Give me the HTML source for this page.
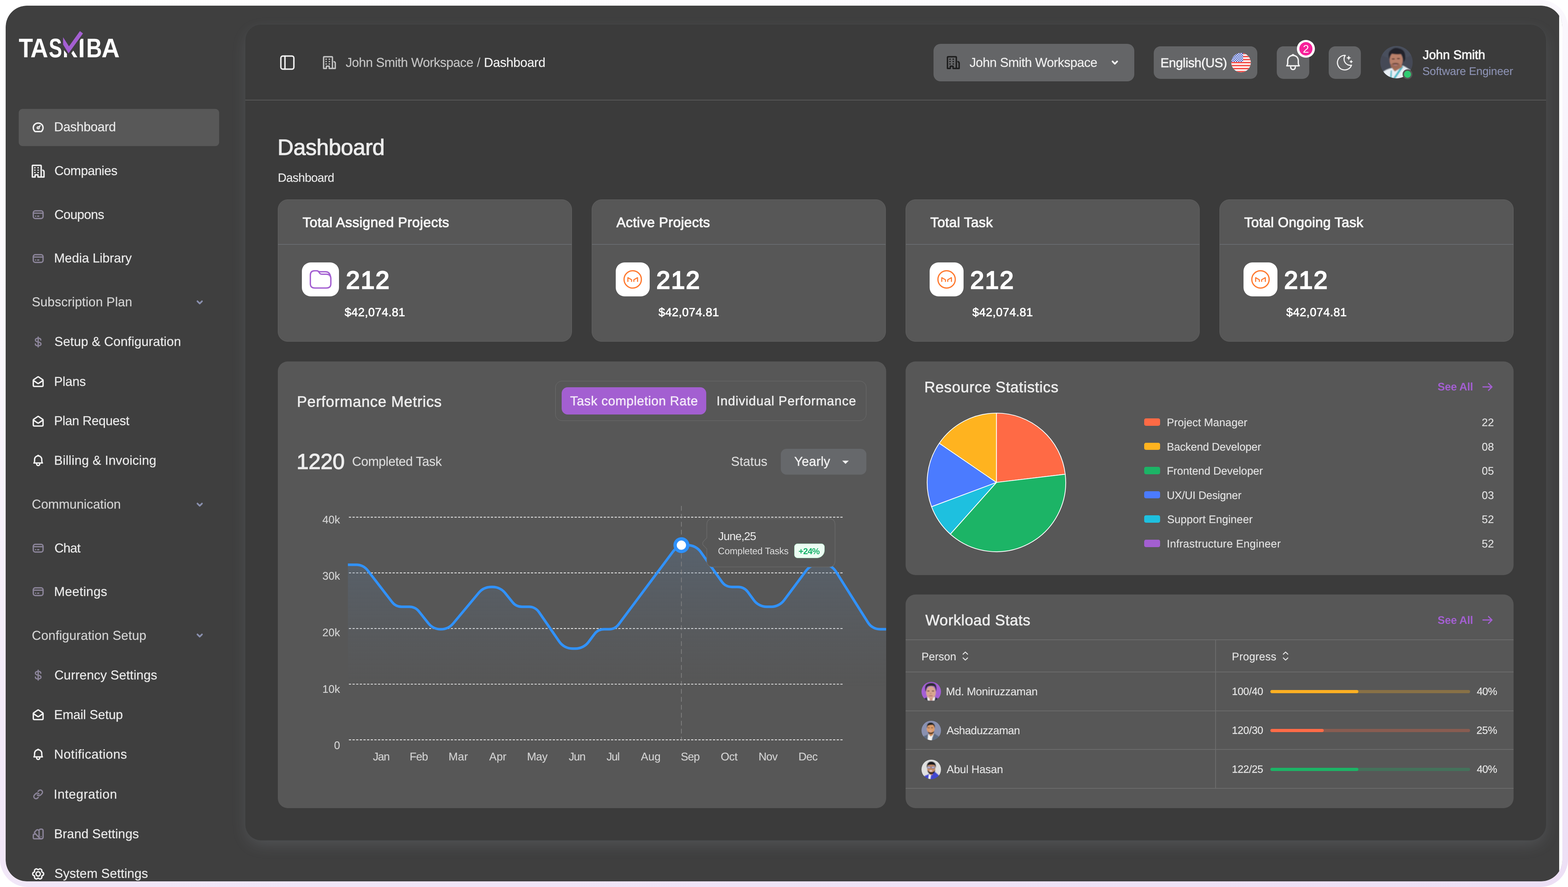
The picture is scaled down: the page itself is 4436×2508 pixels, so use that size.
<!DOCTYPE html>
<html lang="en"><head><meta charset="utf-8">
<title>Taskiba Dashboard</title>
<style>
*{box-sizing:border-box;margin:0;padding:0}
html,body{width:4436px;height:2508px;overflow:hidden;background:#fff}
body{position:relative;font-family:"Liberation Sans", sans-serif;}
.b{position:absolute;display:block}
.t{position:absolute;white-space:pre;line-height:1;font-family:"Liberation Sans", sans-serif;will-change:transform;text-rendering:geometricPrecision}
</style></head><body>
<div class="b" style="left:0px;top:0px;width:4436px;height:2508px;background:linear-gradient(168deg,#ffffff 0%,#fbf9fd 25%,#f3eaf9 60%,#eddff5 100%);border-radius:78px;"></div>
<div class="b" style="left:16px;top:16px;width:4404px;height:2476px;border-radius:60px;background:#fff;overflow:hidden"><div class="b" style="left:0;top:0;width:4404px;height:2476px;border-radius:60px;background:#3f3f3f"></div><div class="b" style="left:4395px;top:0;width:9px;height:2476px;background:#fff"></div></div>
<div class="b" style="left:692.6px;top:67.6px;width:3682.4px;height:2309.4px;background:#3b3b3b;border-radius:46px;border:1px solid #464849;box-shadow:0 16px 46px -8px rgba(170,182,194,0.20);"></div>
<div class="b" style="left:693.6px;top:282.4px;width:3680.4px;height:2px;background:#5c5c5c;"></div>
<div class="b" style="left:0;top:0;width:400px;height:200px">
<span class="t" style="top:99.00px;font-size:76px;color:#ffffff;left:52.70px;transform-origin:0 0;transform:scaleX(0.8652);font-weight:700;">T</span>
<span class="t" style="top:99.00px;font-size:76px;color:#ffffff;left:86.48px;transform-origin:0 0;transform:scaleX(0.9154);font-weight:700;">A</span>
<span class="t" style="top:99.00px;font-size:76px;color:#ffffff;left:137.62px;transform-origin:0 0;transform:scaleX(0.7413);font-weight:700;">S</span>
<span class="t" style="top:99.00px;font-size:76px;color:#ffffff;left:176.83px;transform-origin:0 0;transform:scaleX(0.7740);font-weight:700;">K</span>
<span class="t" style="top:99.00px;font-size:76px;color:#ffffff;left:220.88px;transform-origin:0 0;transform:scaleX(0.9250);font-weight:700;">I</span>
<span class="t" style="top:99.00px;font-size:76px;color:#ffffff;left:243.95px;transform-origin:0 0;transform:scaleX(0.8106);font-weight:700;">B</span>
<span class="t" style="top:99.00px;font-size:76px;color:#ffffff;left:287.16px;transform-origin:0 0;transform:scaleX(0.9385);font-weight:700;">A</span>
</div>
<svg class="b" style="left:170px;top:80px" width="80" height="90" viewBox="170 80 80 90"><path d="M175 100 L224 100 L224 120.7 L201.1 151.4 L197.2 157.2 L194 158 L180.7 141.2 L175 134 Z" fill="#3f3f3f"/><path d="M223 106 L231 106 L224.4 117.6 L223 117.6 Z" fill="#3f3f3f"/><path d="M178.5 105.2 L178.5 126 L193.9 151.1 L234.8 94.5 L226.1 88 L195.1 131 Z" fill="#a45fd2"/></svg>
<div class="b" style="left:52.6px;top:307.5px;width:567.4px;height:105.2px;background:#585858;border-radius:11px;"></div>
<svg class="b" style="left:87.6px;top:339.8px;" width="40" height="40" viewBox="-20 -20 40 40" fill="none" xmlns="http://www.w3.org/2000/svg"><path d="M-7.6 12 H7.6 C10 12 13.8 6.6 13.8 1.4 C13.8 -6.4 7.6 -12 0 -12 C-7.6 -12 -13.8 -6.4 -13.8 1.4 C-13.8 6.6 -10 12 -7.6 12 Z" stroke="#f2f2f2" stroke-width="4" stroke-linecap="round" stroke-linejoin="round" fill="none"/><circle cx="0" cy="1.4" r="2.9" stroke="#f2f2f2" stroke-width="3.2" stroke-linecap="round" stroke-linejoin="round" fill="none"/><path d="M2.4 -1 L5.6 -4.4" stroke="#f2f2f2" stroke-width="3.4" stroke-linecap="round" stroke-linejoin="round" fill="none"/></svg>
<div class="t" style="top:341.00px;font-size:36.4px;color:#e9e9e9;letter-spacing:-0.386px;-webkit-text-stroke:0.3px #e9e9e9;left:152.65px;">Dashboard</div>
<svg class="b" style="left:85.6px;top:461.5px;" width="44" height="44" viewBox="-22 -22 44 44" fill="none" xmlns="http://www.w3.org/2000/svg"><g transform="scale(1.0)"><path d="M-16.5 16.5 V-14.5 Q-16.5 -16.5 -14.5 -16.5 H6.5 Q8.5 -16.5 8.5 -14.5 V16.5 M-16.5 16.5 H-8.6 V10.2 H-0.6 V16.5 H16.5 V1.2 Q16.5 -1.2 13.2 -2.6" stroke="#f2f2f2" stroke-width="4" stroke-linecap="round" stroke-linejoin="round" fill="none"/><path d="M-9.8 -9.6 h0.9 M-0.6 -9.6 h0.9 M-9.8 -2.9 h0.9 M-0.6 -2.9 h0.9 M-9.8 3.9 h0.9 M-0.6 3.9 h0.9" stroke="#f2f2f2" stroke-width="3.6" stroke-linecap="round" stroke-linejoin="round" fill="none"/></g></svg>
<div class="t" style="top:465.00px;font-size:36.4px;color:#e9e9e9;letter-spacing:-0.697px;-webkit-text-stroke:0.3px #e9e9e9;left:153.65px;">Companies</div>
<svg class="b" style="left:87.6px;top:587.4px;" width="40" height="40" viewBox="-20 -20 40 40" fill="none" xmlns="http://www.w3.org/2000/svg"><rect x="-13.8" y="-10.8" width="27.6" height="21.6" rx="5.5" stroke="#8b8499" stroke-width="3.7" stroke-linecap="round" stroke-linejoin="round" fill="none"/><path d="M-13.8 -4.2 H13.8" stroke="#8b8499" stroke-width="3.4" stroke-linecap="round" stroke-linejoin="round" fill="none"/><path d="M-7.6 4.3 h0.6 M-1.6 4.3 h3.4" stroke="#8b8499" stroke-width="3.6" stroke-linecap="round" stroke-linejoin="round" fill="none"/></svg>
<div class="t" style="top:589.00px;font-size:36.4px;color:#e9e9e9;letter-spacing:-0.796px;-webkit-text-stroke:0.3px #e9e9e9;left:153.65px;">Coupons</div>
<svg class="b" style="left:87.6px;top:710.8px;" width="40" height="40" viewBox="-20 -20 40 40" fill="none" xmlns="http://www.w3.org/2000/svg"><rect x="-13.8" y="-10.8" width="27.6" height="21.6" rx="5.5" stroke="#8b8499" stroke-width="3.7" stroke-linecap="round" stroke-linejoin="round" fill="none"/><path d="M-13.8 -4.2 H13.8" stroke="#8b8499" stroke-width="3.4" stroke-linecap="round" stroke-linejoin="round" fill="none"/><path d="M-7.6 4.3 h0.6 M-1.6 4.3 h3.4" stroke="#8b8499" stroke-width="3.6" stroke-linecap="round" stroke-linejoin="round" fill="none"/></svg>
<div class="t" style="top:712.00px;font-size:36.4px;color:#e9e9e9;letter-spacing:-0.055px;-webkit-text-stroke:0.3px #e9e9e9;left:152.65px;">Media Library</div>
<div class="t" style="top:836.00px;font-size:36.4px;color:#d2d2d2;letter-spacing:0.056px;-webkit-text-stroke:0.25px #d2d2d2;left:89.72px;">Subscription Plan</div>
<svg class="b" style="left:551.3px;top:840.6px;" width="28" height="28" viewBox="-14 -14 28 28" fill="none" xmlns="http://www.w3.org/2000/svg"><path d="M-6.4 -3.2 L0 3.2 L6.4 -3.2" stroke="#8a90ae" stroke-width="4.6" stroke-linecap="round" stroke-linejoin="round" fill="none"/></svg>
<svg class="b" style="left:87.6px;top:946.9px;" width="40" height="40" viewBox="-20 -20 40 40" fill="none" xmlns="http://www.w3.org/2000/svg"><path d="M0 -14 V14" stroke="#8b8499" stroke-width="3.6" stroke-linecap="round" stroke-linejoin="round" fill="none"/><path d="M7.6 -5.4 C7.6 -9 4.6 -10.6 0 -10.6 C-4.6 -10.6 -7.8 -8.8 -7.8 -5.6 C-7.8 -2.2 -4.8 -1 0 0 C4.8 1 8 2.2 8 5.6 C8 8.8 4.6 10.6 0 10.6 C-4.6 10.6 -7.9 9 -7.9 5.4" stroke="#8b8499" stroke-width="3.6" stroke-linecap="round" stroke-linejoin="round" fill="none"/></svg>
<div class="t" style="top:948.00px;font-size:36.4px;color:#e9e9e9;letter-spacing:0.104px;-webkit-text-stroke:0.3px #e9e9e9;left:153.65px;">Setup &amp; Configuration</div>
<svg class="b" style="left:87.6px;top:1059.2px;" width="40" height="40" viewBox="-20 -20 40 40" fill="none" xmlns="http://www.w3.org/2000/svg"><path d="M-13.8 -3.4 Q-13.8 -4.6 -12.8 -5.3 L-1.6 -13 Q0 -14 1.6 -13 L12.8 -5.3 Q13.8 -4.6 13.8 -3.4 V10.4 Q13.8 13.6 10.6 13.6 H-10.6 Q-13.8 13.6 -13.8 10.4 Z" stroke="#f2f2f2" stroke-width="3.9" stroke-linecap="round" stroke-linejoin="round" fill="none"/><path d="M-12.6 -2.6 L-1.6 4.9 Q0 5.9 1.6 4.9 L12.6 -2.6" stroke="#f2f2f2" stroke-width="3.9" stroke-linecap="round" stroke-linejoin="round" fill="none"/></svg>
<div class="t" style="top:1061.00px;font-size:36.4px;color:#e9e9e9;letter-spacing:-0.284px;-webkit-text-stroke:0.3px #e9e9e9;left:152.65px;">Plans</div>
<svg class="b" style="left:87.6px;top:1170.7px;" width="40" height="40" viewBox="-20 -20 40 40" fill="none" xmlns="http://www.w3.org/2000/svg"><path d="M-13.8 -3.4 Q-13.8 -4.6 -12.8 -5.3 L-1.6 -13 Q0 -14 1.6 -13 L12.8 -5.3 Q13.8 -4.6 13.8 -3.4 V10.4 Q13.8 13.6 10.6 13.6 H-10.6 Q-13.8 13.6 -13.8 10.4 Z" stroke="#f2f2f2" stroke-width="3.9" stroke-linecap="round" stroke-linejoin="round" fill="none"/><path d="M-12.6 -2.6 L-1.6 4.9 Q0 5.9 1.6 4.9 L12.6 -2.6" stroke="#f2f2f2" stroke-width="3.9" stroke-linecap="round" stroke-linejoin="round" fill="none"/></svg>
<div class="t" style="top:1172.00px;font-size:36.4px;color:#e9e9e9;letter-spacing:-0.498px;-webkit-text-stroke:0.3px #e9e9e9;left:152.65px;">Plan Request</div>
<svg class="b" style="left:79.6px;top:1275px;" width="56" height="56" viewBox="-28 -28 56 56" fill="none" xmlns="http://www.w3.org/2000/svg"><g transform="scale(1.0)"><path d="M-12 6.2 H12 C10.6 4.6 10.2 2.8 10.2 0 V-3.6 C10.2 -9.6 6 -13.8 0 -13.8 C-6 -13.8 -10.2 -9.6 -10.2 -3.6 V0 C-10.2 2.8 -10.6 4.6 -12 6.2 Z" stroke="#f2f2f2" stroke-width="3.8" stroke-linecap="round" stroke-linejoin="round" fill="none"/><path d="M-4.4 8.6 C-4.4 11.4 -2.6 13.4 0 13.4 C2.6 13.4 4.4 11.4 4.4 8.6" stroke="#f2f2f2" stroke-width="3.8" stroke-linecap="round" stroke-linejoin="round" fill="none"/><path d="M-1.4 -14.6 Q0 -16 1.4 -14.6" stroke="#f2f2f2" stroke-width="3.8" stroke-linecap="round" stroke-linejoin="round" fill="none"/></g></svg>
<div class="t" style="top:1284.00px;font-size:36.4px;color:#e9e9e9;letter-spacing:0.224px;-webkit-text-stroke:0.3px #e9e9e9;left:152.65px;">Billing &amp; Invoicing</div>
<div class="t" style="top:1408.00px;font-size:36.4px;color:#d2d2d2;letter-spacing:-0.086px;-webkit-text-stroke:0.25px #d2d2d2;left:89.72px;">Communication</div>
<svg class="b" style="left:551.3px;top:1412.5px;" width="28" height="28" viewBox="-14 -14 28 28" fill="none" xmlns="http://www.w3.org/2000/svg"><path d="M-6.4 -3.2 L0 3.2 L6.4 -3.2" stroke="#8a90ae" stroke-width="4.6" stroke-linecap="round" stroke-linejoin="round" fill="none"/></svg>
<svg class="b" style="left:87.6px;top:1530px;" width="40" height="40" viewBox="-20 -20 40 40" fill="none" xmlns="http://www.w3.org/2000/svg"><rect x="-13.8" y="-10.8" width="27.6" height="21.6" rx="5.5" stroke="#8b8499" stroke-width="3.7" stroke-linecap="round" stroke-linejoin="round" fill="none"/><path d="M-13.8 -4.2 H13.8" stroke="#8b8499" stroke-width="3.4" stroke-linecap="round" stroke-linejoin="round" fill="none"/><path d="M-7.6 4.3 h0.6 M-1.6 4.3 h3.4" stroke="#8b8499" stroke-width="3.6" stroke-linecap="round" stroke-linejoin="round" fill="none"/></svg>
<div class="t" style="top:1532.00px;font-size:36.4px;color:#e9e9e9;letter-spacing:-0.953px;-webkit-text-stroke:0.3px #e9e9e9;left:153.65px;">Chat</div>
<svg class="b" style="left:87.6px;top:1653.4px;" width="40" height="40" viewBox="-20 -20 40 40" fill="none" xmlns="http://www.w3.org/2000/svg"><rect x="-13.8" y="-10.8" width="27.6" height="21.6" rx="5.5" stroke="#8b8499" stroke-width="3.7" stroke-linecap="round" stroke-linejoin="round" fill="none"/><path d="M-13.8 -4.2 H13.8" stroke="#8b8499" stroke-width="3.4" stroke-linecap="round" stroke-linejoin="round" fill="none"/><path d="M-7.6 4.3 h0.6 M-1.6 4.3 h3.4" stroke="#8b8499" stroke-width="3.6" stroke-linecap="round" stroke-linejoin="round" fill="none"/></svg>
<div class="t" style="top:1655.00px;font-size:36.4px;color:#e9e9e9;letter-spacing:0.377px;-webkit-text-stroke:0.3px #e9e9e9;left:152.65px;">Meetings</div>
<div class="t" style="top:1779.00px;font-size:36.4px;color:#d2d2d2;letter-spacing:0.134px;-webkit-text-stroke:0.25px #d2d2d2;left:89.72px;">Configuration Setup</div>
<svg class="b" style="left:551.3px;top:1783.4px;" width="28" height="28" viewBox="-14 -14 28 28" fill="none" xmlns="http://www.w3.org/2000/svg"><path d="M-6.4 -3.2 L0 3.2 L6.4 -3.2" stroke="#8a90ae" stroke-width="4.6" stroke-linecap="round" stroke-linejoin="round" fill="none"/></svg>
<svg class="b" style="left:87.6px;top:1889.3px;" width="40" height="40" viewBox="-20 -20 40 40" fill="none" xmlns="http://www.w3.org/2000/svg"><path d="M0 -14 V14" stroke="#8b8499" stroke-width="3.6" stroke-linecap="round" stroke-linejoin="round" fill="none"/><path d="M7.6 -5.4 C7.6 -9 4.6 -10.6 0 -10.6 C-4.6 -10.6 -7.8 -8.8 -7.8 -5.6 C-7.8 -2.2 -4.8 -1 0 0 C4.8 1 8 2.2 8 5.6 C8 8.8 4.6 10.6 0 10.6 C-4.6 10.6 -7.9 9 -7.9 5.4" stroke="#8b8499" stroke-width="3.6" stroke-linecap="round" stroke-linejoin="round" fill="none"/></svg>
<div class="t" style="top:1891.00px;font-size:36.4px;color:#e9e9e9;letter-spacing:0.092px;-webkit-text-stroke:0.3px #e9e9e9;left:153.65px;">Currency Settings</div>
<svg class="b" style="left:87.6px;top:2001.4px;" width="40" height="40" viewBox="-20 -20 40 40" fill="none" xmlns="http://www.w3.org/2000/svg"><path d="M-13.8 -3.4 Q-13.8 -4.6 -12.8 -5.3 L-1.6 -13 Q0 -14 1.6 -13 L12.8 -5.3 Q13.8 -4.6 13.8 -3.4 V10.4 Q13.8 13.6 10.6 13.6 H-10.6 Q-13.8 13.6 -13.8 10.4 Z" stroke="#f2f2f2" stroke-width="3.9" stroke-linecap="round" stroke-linejoin="round" fill="none"/><path d="M-12.6 -2.6 L-1.6 4.9 Q0 5.9 1.6 4.9 L12.6 -2.6" stroke="#f2f2f2" stroke-width="3.9" stroke-linecap="round" stroke-linejoin="round" fill="none"/></svg>
<div class="t" style="top:2003.00px;font-size:36.4px;color:#e9e9e9;letter-spacing:-0.147px;-webkit-text-stroke:0.3px #e9e9e9;left:152.65px;">Email Setup</div>
<svg class="b" style="left:79.6px;top:2105.6px;" width="56" height="56" viewBox="-28 -28 56 56" fill="none" xmlns="http://www.w3.org/2000/svg"><g transform="scale(1.0)"><path d="M-12 6.2 H12 C10.6 4.6 10.2 2.8 10.2 0 V-3.6 C10.2 -9.6 6 -13.8 0 -13.8 C-6 -13.8 -10.2 -9.6 -10.2 -3.6 V0 C-10.2 2.8 -10.6 4.6 -12 6.2 Z" stroke="#f2f2f2" stroke-width="3.8" stroke-linecap="round" stroke-linejoin="round" fill="none"/><path d="M-4.4 8.6 C-4.4 11.4 -2.6 13.4 0 13.4 C2.6 13.4 4.4 11.4 4.4 8.6" stroke="#f2f2f2" stroke-width="3.8" stroke-linecap="round" stroke-linejoin="round" fill="none"/><path d="M-1.4 -14.6 Q0 -16 1.4 -14.6" stroke="#f2f2f2" stroke-width="3.8" stroke-linecap="round" stroke-linejoin="round" fill="none"/></g></svg>
<div class="t" style="top:2115.00px;font-size:36.4px;color:#e9e9e9;letter-spacing:0.674px;-webkit-text-stroke:0.3px #e9e9e9;left:152.65px;">Notifications</div>
<svg class="b" style="left:87.6px;top:2226px;" width="40" height="40" viewBox="-20 -20 40 40" fill="none" xmlns="http://www.w3.org/2000/svg"><g transform="translate(-14.9,-14.7) scale(1.235)"><path d="M10 13a5 5 0 0 0 7.54.54l3-3a5 5 0 0 0-7.07-7.07l-1.72 1.71" stroke="#8b8499" stroke-width="2.9" stroke-linecap="round" stroke-linejoin="round" fill="none"/><path d="M14 11a5 5 0 0 0-7.54-.54l-3 3a5 5 0 0 0 7.07 7.07l1.71-1.71" stroke="#8b8499" stroke-width="2.9" stroke-linecap="round" stroke-linejoin="round" fill="none"/></g></svg>
<div class="t" style="top:2228.00px;font-size:36.4px;color:#e9e9e9;letter-spacing:0.707px;-webkit-text-stroke:0.3px #e9e9e9;left:151.65px;">Integration</div>
<svg class="b" style="left:87.6px;top:2338.3px;" width="40" height="40" viewBox="-20 -20 40 40" fill="none" xmlns="http://www.w3.org/2000/svg"><rect x="2.6" y="-13.6" width="11.2" height="27.2" rx="4" stroke="#8b8499" stroke-width="3.7" stroke-linecap="round" stroke-linejoin="round" fill="none"/><path d="M2.6 -9.6 L-1 -11.6 Q-3 -12.6 -4.6 -11 L-9.8 -5.6 Q-11.2 -4 -9.8 -2.6 L4.6 12.2" stroke="#8b8499" stroke-width="3.7" stroke-linecap="round" stroke-linejoin="round" fill="none"/><path d="M-8.2 0.6 H-10.6 Q-13.8 0.6 -13.8 3.8 V10.4 Q-13.8 13.6 -10.6 13.6 H9" stroke="#8b8499" stroke-width="3.7" stroke-linecap="round" stroke-linejoin="round" fill="none"/><circle cx="8.2" cy="7.6" r="1.6" fill="#8b8499"/></svg>
<div class="t" style="top:2340.00px;font-size:36.4px;color:#e9e9e9;letter-spacing:0.099px;-webkit-text-stroke:0.3px #e9e9e9;left:152.65px;">Brand Settings</div>
<svg class="b" style="left:85.6px;top:2448.5px;" width="44" height="44" viewBox="-22 -22 44 44" fill="none" xmlns="http://www.w3.org/2000/svg"><path d="M12.53 -4.69 Q15.52 -3.87 15.52 0.00 Q15.52 3.87 12.53 4.69 Q9.53 5.50 10.32 8.50 Q11.11 11.51 7.76 13.44 Q4.41 15.38 2.21 13.19 Q0.00 11.00 -2.21 13.19 Q-4.41 15.38 -7.76 13.44 Q-11.11 11.51 -10.32 8.50 Q-9.53 5.50 -12.53 4.69 Q-15.52 3.87 -15.52 0.00 Q-15.52 -3.87 -12.53 -4.69 Q-9.53 -5.50 -10.32 -8.50 Q-11.11 -11.51 -7.76 -13.44 Q-4.41 -15.38 -2.21 -13.19 Q-0.00 -11.00 2.21 -13.19 Q4.41 -15.38 7.76 -13.44 Q11.11 -11.51 10.32 -8.50 Q9.53 -5.50 12.53 -4.69Z" stroke="#f2f2f2" stroke-width="3.8" stroke-linecap="round" stroke-linejoin="round" fill="none"/><circle cx="0" cy="0" r="6.1" stroke="#f2f2f2" stroke-width="3.8" stroke-linecap="round" stroke-linejoin="round" fill="none"/></svg>
<div class="t" style="top:2452.00px;font-size:36.4px;color:#e9e9e9;letter-spacing:0.134px;-webkit-text-stroke:0.3px #e9e9e9;left:153.65px;">System Settings</div>
<svg class="b" style="left:788.5px;top:152.8px;" width="48" height="48" viewBox="-24 -24 48 48" fill="none" xmlns="http://www.w3.org/2000/svg"><rect x="-18.4" y="-18.4" width="36.8" height="36.8" rx="5.5" stroke="#f2f2f2" stroke-width="4" stroke-linecap="round" stroke-linejoin="round" fill="none"/><path d="M-6.8 -18.4 V18.4" stroke="#f2f2f2" stroke-width="4" stroke-linecap="round" stroke-linejoin="round" fill="none"/></svg>
<svg class="b" style="left:909.7px;top:154.8px;" width="44" height="44" viewBox="-22 -22 44 44" fill="none" xmlns="http://www.w3.org/2000/svg"><g transform="scale(1.0)"><path d="M-16.5 16.5 V-14.5 Q-16.5 -16.5 -14.5 -16.5 H6.5 Q8.5 -16.5 8.5 -14.5 V16.5 M-16.5 16.5 H-8.6 V10.2 H-0.6 V16.5 H16.5 V1.2 Q16.5 -1.2 13.2 -2.6" stroke="#c4c4c4" stroke-width="3.8" stroke-linecap="round" stroke-linejoin="round" fill="none"/><path d="M-9.8 -9.6 h0.9 M-0.6 -9.6 h0.9 M-9.8 -2.9 h0.9 M-0.6 -2.9 h0.9 M-9.8 3.9 h0.9 M-0.6 3.9 h0.9" stroke="#c4c4c4" stroke-width="3.6" stroke-linecap="round" stroke-linejoin="round" fill="none"/></g></svg>
<div class="t" style="top:159.00px;font-size:36.4px;color:#c3c3c3;letter-spacing:-0.638px;-webkit-text-stroke:0.25px #c3c3c3;left:978.42px;">John Smith Workspace</div>
<div class="t" style="top:159.00px;font-size:36.4px;color:#c3c3c3;left:1348.60px;">/</div>
<div class="t" style="top:159.00px;font-size:36.4px;color:#efefef;letter-spacing:-0.480px;-webkit-text-stroke:0.25px #efefef;left:1368.53px;">Dashboard</div>
<div class="b" style="left:2641.3px;top:124px;width:568px;height:106px;background:#646567;border-radius:20px;"></div>
<svg class="b" style="left:2674.5px;top:155px;" width="44" height="44" viewBox="-22 -22 44 44" fill="none" xmlns="http://www.w3.org/2000/svg"><g transform="scale(1.0)"><path d="M-16.5 16.5 V-14.5 Q-16.5 -16.5 -14.5 -16.5 H6.5 Q8.5 -16.5 8.5 -14.5 V16.5 M-16.5 16.5 H-8.6 V10.2 H-0.6 V16.5 H16.5 V1.2 Q16.5 -1.2 13.2 -2.6" stroke="#1c1c1c" stroke-width="4" stroke-linecap="round" stroke-linejoin="round" fill="none"/><path d="M-9.8 -9.6 h0.9 M-0.6 -9.6 h0.9 M-9.8 -2.9 h0.9 M-0.6 -2.9 h0.9 M-9.8 3.9 h0.9 M-0.6 3.9 h0.9" stroke="#1c1c1c" stroke-width="3.6" stroke-linecap="round" stroke-linejoin="round" fill="none"/></g></svg>
<div class="t" style="top:159.00px;font-size:36.4px;color:#efefef;letter-spacing:-0.616px;-webkit-text-stroke:0.25px #efefef;left:2743.32px;">John Smith Workspace</div>
<svg class="b" style="left:3140.3px;top:163.2px;" width="28" height="28" viewBox="-14 -14 28 28" fill="none" xmlns="http://www.w3.org/2000/svg"><path d="M-6.6 -3.4 L0 3.4 L6.6 -3.4" stroke="#f4f4f4" stroke-width="4.6" stroke-linecap="round" stroke-linejoin="round" fill="none"/></svg>
<div class="b" style="left:3264px;top:130.8px;width:293.1px;height:92.4px;background:#646567;border-radius:19px;"></div>
<div class="t" style="top:160.00px;font-size:36.4px;color:#efefef;letter-spacing:-0.542px;-webkit-text-stroke:0.9px #efefef;left:3282.95px;">English(US)</div>
<svg class="b" style="left:3481.2px;top:146.9px;" width="60" height="60" viewBox="-30 -30 60 60" fill="none" xmlns="http://www.w3.org/2000/svg"><defs><clipPath id="fc"><circle cx="0" cy="0" r="27.6"/></clipPath></defs><g clip-path="url(#fc)"><rect x="-28" y="-28" width="56" height="56" fill="#ffffff"/><rect x="-28" y="-27.60" width="56" height="4.25" fill="#f4524d"/><rect x="-28" y="-19.11" width="56" height="4.25" fill="#f4524d"/><rect x="-28" y="-10.62" width="56" height="4.25" fill="#f4524d"/><rect x="-28" y="-2.12" width="56" height="4.25" fill="#f4524d"/><rect x="-28" y="6.37" width="56" height="4.25" fill="#f4524d"/><rect x="-28" y="14.86" width="56" height="4.25" fill="#f4524d"/><rect x="-28" y="23.35" width="56" height="4.25" fill="#f4524d"/><rect x="-28" y="-28" width="33.5" height="26" fill="#3f5bc4"/><rect x="-27.60" y="-27.00" width="3.3" height="3.15" fill="#f4f4fa"/><rect x="-21.00" y="-27.00" width="3.3" height="3.15" fill="#f4f4fa"/><rect x="-14.40" y="-27.00" width="3.3" height="3.15" fill="#f4f4fa"/><rect x="-7.80" y="-27.00" width="3.3" height="3.15" fill="#f4f4fa"/><rect x="-1.20" y="-27.00" width="3.3" height="3.15" fill="#f4f4fa"/><rect x="-24.30" y="-23.85" width="3.3" height="3.15" fill="#f4f4fa"/><rect x="-17.70" y="-23.85" width="3.3" height="3.15" fill="#f4f4fa"/><rect x="-11.10" y="-23.85" width="3.3" height="3.15" fill="#f4f4fa"/><rect x="-4.50" y="-23.85" width="3.3" height="3.15" fill="#f4f4fa"/><rect x="2.10" y="-23.85" width="3.3" height="3.15" fill="#f4f4fa"/><rect x="-27.60" y="-20.70" width="3.3" height="3.15" fill="#f4f4fa"/><rect x="-21.00" y="-20.70" width="3.3" height="3.15" fill="#f4f4fa"/><rect x="-14.40" y="-20.70" width="3.3" height="3.15" fill="#f4f4fa"/><rect x="-7.80" y="-20.70" width="3.3" height="3.15" fill="#f4f4fa"/><rect x="-1.20" y="-20.70" width="3.3" height="3.15" fill="#f4f4fa"/><rect x="-24.30" y="-17.55" width="3.3" height="3.15" fill="#f4f4fa"/><rect x="-17.70" y="-17.55" width="3.3" height="3.15" fill="#f4f4fa"/><rect x="-11.10" y="-17.55" width="3.3" height="3.15" fill="#f4f4fa"/><rect x="-4.50" y="-17.55" width="3.3" height="3.15" fill="#f4f4fa"/><rect x="2.10" y="-17.55" width="3.3" height="3.15" fill="#f4f4fa"/><rect x="-27.60" y="-14.40" width="3.3" height="3.15" fill="#f4f4fa"/><rect x="-21.00" y="-14.40" width="3.3" height="3.15" fill="#f4f4fa"/><rect x="-14.40" y="-14.40" width="3.3" height="3.15" fill="#f4f4fa"/><rect x="-7.80" y="-14.40" width="3.3" height="3.15" fill="#f4f4fa"/><rect x="-1.20" y="-14.40" width="3.3" height="3.15" fill="#f4f4fa"/><rect x="-24.30" y="-11.25" width="3.3" height="3.15" fill="#f4f4fa"/><rect x="-17.70" y="-11.25" width="3.3" height="3.15" fill="#f4f4fa"/><rect x="-11.10" y="-11.25" width="3.3" height="3.15" fill="#f4f4fa"/><rect x="-4.50" y="-11.25" width="3.3" height="3.15" fill="#f4f4fa"/><rect x="2.10" y="-11.25" width="3.3" height="3.15" fill="#f4f4fa"/><rect x="-27.60" y="-8.10" width="3.3" height="3.15" fill="#f4f4fa"/><rect x="-21.00" y="-8.10" width="3.3" height="3.15" fill="#f4f4fa"/><rect x="-14.40" y="-8.10" width="3.3" height="3.15" fill="#f4f4fa"/><rect x="-7.80" y="-8.10" width="3.3" height="3.15" fill="#f4f4fa"/><rect x="-1.20" y="-8.10" width="3.3" height="3.15" fill="#f4f4fa"/><rect x="-24.30" y="-4.95" width="3.3" height="3.15" fill="#f4f4fa"/><rect x="-17.70" y="-4.95" width="3.3" height="3.15" fill="#f4f4fa"/><rect x="-11.10" y="-4.95" width="3.3" height="3.15" fill="#f4f4fa"/><rect x="-4.50" y="-4.95" width="3.3" height="3.15" fill="#f4f4fa"/><rect x="2.10" y="-4.95" width="3.3" height="3.15" fill="#f4f4fa"/></g></svg>
<div class="b" style="left:3612px;top:130.8px;width:91.6px;height:92.4px;background:#646567;border-radius:19px;"></div>
<svg class="b" style="left:3629.8px;top:149px;" width="56" height="56" viewBox="-28 -28 56 56" fill="none" xmlns="http://www.w3.org/2000/svg"><g transform="scale(1.47)"><path d="M-12 6.2 H12 C10.6 4.6 10.2 2.8 10.2 0 V-3.6 C10.2 -9.6 6 -13.8 0 -13.8 C-6 -13.8 -10.2 -9.6 -10.2 -3.6 V0 C-10.2 2.8 -10.6 4.6 -12 6.2 Z" stroke="#f2f2f2" stroke-width="2.6" stroke-linecap="round" stroke-linejoin="round" fill="none"/><path d="M-4.4 8.6 C-4.4 11.4 -2.6 13.4 0 13.4 C2.6 13.4 4.4 11.4 4.4 8.6" stroke="#f2f2f2" stroke-width="2.6" stroke-linecap="round" stroke-linejoin="round" fill="none"/><path d="M-1.4 -14.6 Q0 -16 1.4 -14.6" stroke="#f2f2f2" stroke-width="2.6" stroke-linecap="round" stroke-linejoin="round" fill="none"/></g></svg>
<div class="b" style="left:3668.9px;top:112.6px;width:50.8px;height:50.8px;background:#ffffff;border-radius:26px;"></div>
<div class="b" style="left:3675.7px;top:119.4px;width:37.2px;height:37.2px;background:#f7219a;border-radius:20px;"></div>
<div class="t" style="top:123.00px;font-size:31px;color:#ffffff;left:3685.80px;">2</div>
<div class="b" style="left:3758.5px;top:130.8px;width:91.6px;height:92.4px;background:#646567;border-radius:19px;"></div>
<svg class="b" style="left:3773.6px;top:147.2px;" width="60" height="60" viewBox="-30 -30 60 60" fill="none" xmlns="http://www.w3.org/2000/svg"><path d="M1.8 -20.4 A20.6 20.6 0 1 0 19.6 7.2 A17.6 17.6 0 0 1 1.8 -20.4 Z" stroke="#f2f2f2" stroke-width="3.1" stroke-linecap="round" stroke-linejoin="round" fill="none"/><path d="M11.6 -19.0 Q12.36 -14.16 17.2 -13.4 Q12.36 -12.64 11.6 -7.800000000000001 Q10.84 -12.64 6.0 -13.4 Q10.84 -14.16 11.6 -19.0Z" fill="#f2f2f2" stroke="#f2f2f2" stroke-width="1.2" stroke-linejoin="round"/><path d="M18.6 -6.800000000000001 Q19.17 -3.17 22.8 -2.6 Q19.17 -2.03 18.6 1.6 Q18.03 -2.03 14.400000000000002 -2.6 Q18.03 -3.17 18.6 -6.800000000000001Z" fill="#f2f2f2" stroke="#f2f2f2" stroke-width="1.2" stroke-linejoin="round"/></svg>
<svg class="b" style="left:3904px;top:129.1px;" width="93.6" height="93.6" viewBox="-46.8 -46.8 93.6 93.6" fill="none" xmlns="http://www.w3.org/2000/svg"><defs><clipPath id="av0c"><circle cx="0" cy="0" r="1"/></clipPath><filter id="av0f" x="-0.2" y="-0.2" width="1.4" height="1.4"><feGaussianBlur stdDeviation="0.035"/></filter></defs><g transform="scale(45.8)"><g clip-path="url(#av0c)"><g filter="url(#av0f)"><rect x="-1.3" y="-1.3" width="2.6" height="2.6" fill="#444a57"/><ellipse cx="0" cy="-0.9" rx="1.2" ry="0.7" fill="#4a505d"/><path d="M-0.85 0.62 Q-0.6 0.42 -0.25 0.36 L0.4 0.22 Q0.75 0.4 1.0 0.62 L1.1 1.3 L-1.1 1.3 Z" fill="#e9eff5"/><path d="M0.33 0.2 L0.42 0.3 L-0.1 1.05 L-0.2 0.98 Z" fill="#45b9c6"/><path d="M-0.36 0.52 L-0.28 0.5 L-0.3 1.0 L-0.4 1.0 Z" fill="#45b9c6"/><path d="M-0.22 0.2 L0.3 0.1 L0.36 0.3 L-0.1 0.58 L-0.26 0.4 Z" fill="#a86e55"/><ellipse cx="-0.02" cy="-0.12" rx="0.4" ry="0.52" fill="#b9806a"/><ellipse cx="-0.06" cy="0.22" rx="0.3" ry="0.2" fill="#9c6a56"/><path d="M-0.47 -0.25 Q-0.56 -0.62 -0.3 -0.78 Q-0.1 -0.95 0.2 -0.84 Q0.52 -0.76 0.54 -0.4 Q0.58 -0.12 0.42 0.02 Q0.42 -0.3 0.3 -0.5 Q0.0 -0.46 -0.3 -0.52 Q-0.42 -0.4 -0.42 -0.22 Z" fill="#23242a"/><ellipse cx="-0.2" cy="-0.2" rx="0.1" ry="0.035" fill="#4a2f28"/><ellipse cx="0.12" cy="-0.22" rx="0.1" ry="0.035" fill="#4a2f28"/><ellipse cx="-0.06" cy="0.1" rx="0.2" ry="0.035" fill="#5a3a32"/><ellipse cx="-0.06" cy="0.17" rx="0.12" ry="0.04" fill="#b07a80"/></g></g></g></svg>
<div class="b" style="left:3967.6px;top:196.1px;width:28.2px;height:28.2px;background:#565656;border-radius:15px;"></div>
<div class="b" style="left:3971.7px;top:200.2px;width:20px;height:20px;background:#2fcc71;border-radius:10px;"></div>
<div class="t" style="top:138.00px;font-size:35.6px;color:#f0f0f0;letter-spacing:-0.121px;-webkit-text-stroke:1.2px #f0f0f0;left:4025.20px;">John Smith</div>
<div class="t" style="top:186.00px;font-size:31.6px;color:#8c92b3;letter-spacing:-0.200px;-webkit-text-stroke:0.2px #8c92b3;left:4023.70px;">Software Engineer</div>
<div class="t" style="top:386.00px;font-size:63px;color:#ebebeb;letter-spacing:-0.571px;-webkit-text-stroke:1.4px #ebebeb;left:785.20px;">Dashboard</div>
<div class="t" style="top:486.00px;font-size:34px;color:#e8e8e8;letter-spacing:-0.803px;-webkit-text-stroke:0.2px #e8e8e8;left:785.50px;">Dashboard</div>
<div class="b" style="left:785.5px;top:564px;width:832px;height:402px;background:#575757;border-radius:28px;border:1.5px solid #666666;"></div>
<div class="b" style="left:786.5px;top:689.5px;width:830px;height:2px;background:#6a6d71;"></div>
<div class="t" style="top:610.00px;font-size:39px;color:#f5f5f5;letter-spacing:0.513px;-webkit-text-stroke:1.3px #f5f5f5;left:856.05px;">Total Assigned Projects</div>
<div class="b" style="left:854px;top:742.2px;width:105px;height:96px;background:#ffffff;border-radius:25px;"></div>
<svg class="b" style="left:870.5px;top:754.4px;" width="72" height="72" viewBox="-36 -36 72 72" fill="none" xmlns="http://www.w3.org/2000/svg"><path d="M-29 -12 Q-29 -24.4 -17 -24.4 H-11 Q-6.5 -24.4 -4 -19.5 Q-1.5 -14.6 4 -14.6 H16 Q29 -14.6 29 -2 V12 Q29 24.4 16 24.4 H-16 Q-29 24.4 -29 12 Z" stroke="#a35fd1" stroke-width="3.8" stroke-linecap="round" stroke-linejoin="round" fill="none"/><path d="M-6.5 -22.6 Q-5 -21.6 2 -21.6 H14 Q26 -21.6 28.2 -7" stroke="#a35fd1" stroke-width="3.8" stroke-linecap="round" stroke-linejoin="round" fill="none"/></svg>
<div class="t" style="top:757.00px;font-size:70px;color:#ffffff;letter-spacing:2.819px;-webkit-text-stroke:3.2px #ffffff;left:978.60px;">212</div>
<div class="t" style="top:867.00px;font-size:33.2px;color:#ffffff;letter-spacing:0.534px;-webkit-text-stroke:0.95px #ffffff;left:975.08px;">$42,074.81</div>
<div class="b" style="left:1673.5px;top:564px;width:832px;height:402px;background:#575757;border-radius:28px;border:1.5px solid #666666;"></div>
<div class="b" style="left:1674.5px;top:689.5px;width:830px;height:2px;background:#6a6d71;"></div>
<div class="t" style="top:610.00px;font-size:39px;color:#f5f5f5;letter-spacing:0.470px;-webkit-text-stroke:1.3px #f5f5f5;left:1744.05px;">Active Projects</div>
<div class="b" style="left:1742px;top:742.2px;width:96px;height:96px;background:#ffffff;border-radius:25px;"></div>
<svg class="b" style="left:1758px;top:758.3px;" width="64" height="64" viewBox="-32 -32 64 64" fill="none" xmlns="http://www.w3.org/2000/svg"><circle cx="0" cy="0" r="24.5" stroke="#ff7a30" stroke-width="3.5" stroke-linecap="round" stroke-linejoin="round" fill="none"/><path d="M-13.7 5.8 V-4.9 L-3.2 1.0 V5.8 M13.7 5.8 V-4.9 L3.2 1.0 V5.8" stroke="#ff7a30" stroke-width="3.0" stroke-linecap="round" stroke-linejoin="round" fill="none"/></svg>
<div class="t" style="top:757.00px;font-size:70px;color:#ffffff;letter-spacing:2.869px;-webkit-text-stroke:3.2px #ffffff;left:1857.30px;">212</div>
<div class="t" style="top:867.00px;font-size:33.2px;color:#ffffff;letter-spacing:0.534px;-webkit-text-stroke:0.95px #ffffff;left:1863.07px;">$42,074.81</div>
<div class="b" style="left:2561.5px;top:564px;width:832px;height:402px;background:#575757;border-radius:28px;border:1.5px solid #666666;"></div>
<div class="b" style="left:2562.5px;top:689.5px;width:830px;height:2px;background:#6a6d71;"></div>
<div class="t" style="top:610.00px;font-size:39px;color:#f5f5f5;letter-spacing:0.422px;-webkit-text-stroke:1.3px #f5f5f5;left:2632.05px;">Total Task</div>
<div class="b" style="left:2630px;top:742.2px;width:96px;height:96px;background:#ffffff;border-radius:25px;"></div>
<svg class="b" style="left:2646px;top:758.3px;" width="64" height="64" viewBox="-32 -32 64 64" fill="none" xmlns="http://www.w3.org/2000/svg"><circle cx="0" cy="0" r="24.5" stroke="#ff7a30" stroke-width="3.5" stroke-linecap="round" stroke-linejoin="round" fill="none"/><path d="M-13.7 5.8 V-4.9 L-3.2 1.0 V5.8 M13.7 5.8 V-4.9 L3.2 1.0 V5.8" stroke="#ff7a30" stroke-width="3.0" stroke-linecap="round" stroke-linejoin="round" fill="none"/></svg>
<div class="t" style="top:757.00px;font-size:70px;color:#ffffff;letter-spacing:2.869px;-webkit-text-stroke:3.2px #ffffff;left:2745.30px;">212</div>
<div class="t" style="top:867.00px;font-size:33.2px;color:#ffffff;letter-spacing:0.534px;-webkit-text-stroke:0.95px #ffffff;left:2751.07px;">$42,074.81</div>
<div class="b" style="left:3449.5px;top:564px;width:832px;height:402px;background:#575757;border-radius:28px;border:1.5px solid #666666;"></div>
<div class="b" style="left:3450.5px;top:689.5px;width:830px;height:2px;background:#6a6d71;"></div>
<div class="t" style="top:610.00px;font-size:39px;color:#f5f5f5;letter-spacing:0.342px;-webkit-text-stroke:1.3px #f5f5f5;left:3520.05px;">Total Ongoing Task</div>
<div class="b" style="left:3518px;top:742.2px;width:96px;height:96px;background:#ffffff;border-radius:25px;"></div>
<svg class="b" style="left:3534px;top:758.3px;" width="64" height="64" viewBox="-32 -32 64 64" fill="none" xmlns="http://www.w3.org/2000/svg"><circle cx="0" cy="0" r="24.5" stroke="#ff7a30" stroke-width="3.5" stroke-linecap="round" stroke-linejoin="round" fill="none"/><path d="M-13.7 5.8 V-4.9 L-3.2 1.0 V5.8 M13.7 5.8 V-4.9 L3.2 1.0 V5.8" stroke="#ff7a30" stroke-width="3.0" stroke-linecap="round" stroke-linejoin="round" fill="none"/></svg>
<div class="t" style="top:757.00px;font-size:70px;color:#ffffff;letter-spacing:2.869px;-webkit-text-stroke:3.2px #ffffff;left:3633.30px;">212</div>
<div class="t" style="top:867.00px;font-size:33.2px;color:#ffffff;letter-spacing:0.534px;-webkit-text-stroke:0.95px #ffffff;left:3639.07px;">$42,074.81</div>
<div class="b" style="left:785.5px;top:1022px;width:1721px;height:1263px;background:#575757;border-radius:28px;overflow:hidden;"></div>
<div class="t" style="top:1115.00px;font-size:42.6px;color:#ebebeb;letter-spacing:0.916px;-webkit-text-stroke:0.9px #ebebeb;left:839.55px;">Performance Metrics</div>
<div class="b" style="left:1570.5px;top:1076.8px;width:880.7px;height:113.6px;border-radius:19px;border:1.8px solid #6f6f6f;"></div>
<div class="b" style="left:1588.6px;top:1094.6px;width:409.6px;height:77.9px;background:#a35fd1;border-radius:17px;"></div>
<div class="t" style="top:1116.00px;font-size:36.4px;color:#f3e9f9;letter-spacing:0.702px;-webkit-text-stroke:0.7px #f3e9f9;left:1612.85px;">Task completion Rate</div>
<div class="t" style="top:1116.00px;font-size:36.4px;color:#ececec;letter-spacing:1.069px;-webkit-text-stroke:0.7px #ececec;left:2026.95px;">Individual Performance</div>
<div class="t" style="top:1275.00px;font-size:61.4px;color:#ededed;letter-spacing:-0.176px;-webkit-text-stroke:1.7px #ededed;left:838.95px;">1220</div>
<div class="t" style="top:1287.00px;font-size:36.4px;color:#dadada;letter-spacing:-0.493px;-webkit-text-stroke:0.25px #dadada;left:996.12px;">Completed Task</div>
<div class="t" style="top:1287.00px;font-size:36.4px;color:#dadada;letter-spacing:-0.024px;-webkit-text-stroke:0.25px #dadada;left:2068.03px;">Status</div>
<div class="b" style="left:2209.3px;top:1269.3px;width:241.8px;height:72.8px;background:#66686b;border-radius:16px;"></div>
<div class="t" style="top:1287.00px;font-size:36.4px;color:#efefef;letter-spacing:0.338px;-webkit-text-stroke:0.6px #efefef;left:2246.70px;">Yearly</div>
<svg class="b" style="left:2380px;top:1295px;" width="24" height="24" viewBox="-12 -12 24 24" fill="none" xmlns="http://www.w3.org/2000/svg"><path d="M-9.4 -4.6 H9.4 L0 4.8 Z" fill="#f0f0f0"/></svg>
<svg class="b" style="left:785.5px;top:1022px" width="1721" height="1263" viewBox="785.5 1022 1721 1263" fill="none"><defs><linearGradient id="ag" x1="0" y1="0" x2="0" y2="1"><stop offset="0" stop-color="#5a7695" stop-opacity="0.37"/><stop offset="1" stop-color="#5f6a78" stop-opacity="0.0"/></linearGradient></defs><path d="M986.5 1462.4 H2383.5" stroke="#f4f4f4" stroke-width="2.2" stroke-dasharray="6.2 4.1"/><path d="M986.5 1619.9 H2383.5" stroke="#f4f4f4" stroke-width="2.2" stroke-dasharray="6.2 4.1"/><path d="M986.5 1777.2 H2383.5" stroke="#f4f4f4" stroke-width="2.2" stroke-dasharray="6.2 4.1"/><path d="M986.5 1934.5 H2383.5" stroke="#f4f4f4" stroke-width="2.2" stroke-dasharray="6.2 4.1"/><path d="M986.5 2091.9 H2383.5" stroke="#f4f4f4" stroke-width="2.2" stroke-dasharray="6.2 4.1"/><path d="M983.7 1596.8 L1007.7 1596.8 A40.0 40.0 0 0 1 1039.4 1612.4 L1108.8 1702.4 A34.0 34.0 0 0 0 1135.7 1715.7 L1157.9 1715.7 A34.0 34.0 0 0 1 1184.5 1728.5 L1211.5 1762.4 A44.6 44.6 0 0 0 1246.4 1779.2 L1246.4 1779.2 A46.0 46.0 0 0 0 1281.7 1762.7 L1353.9 1676.2 A46.0 46.0 0 0 1 1389.2 1659.6 L1392.8 1659.6 A46.0 46.0 0 0 1 1428.6 1676.8 L1449.7 1703.0 A34.0 34.0 0 0 0 1476.2 1715.7 L1496.0 1715.7 A34.0 34.0 0 0 1 1524.0 1730.4 L1581.5 1813.9 A46.0 46.0 0 0 0 1619.4 1833.9 L1627.5 1833.9 A46.0 46.0 0 0 0 1664.3 1815.5 L1681.3 1792.8 A34.0 34.0 0 0 1 1708.5 1779.2 L1722.3 1779.2 A34.0 34.0 0 0 0 1749.6 1765.6 L1903.2 1559.9 A46.0 46.0 0 0 1 1940.1 1541.4 L1944.5 1541.4 A46.0 46.0 0 0 1 1982.0 1560.8 L2042.1 1645.3 A34.0 34.0 0 0 0 2069.8 1659.6 L2087.6 1659.6 A34.0 34.0 0 0 1 2115.1 1673.6 L2132.1 1696.8 A46.0 46.0 0 0 0 2169.2 1715.7 L2180.9 1715.7 A46.0 46.0 0 0 0 2217.8 1697.2 L2280.4 1613.2 A46.0 46.0 0 0 1 2317.2 1594.7 L2325.5 1594.7 A46.0 46.0 0 0 1 2364.4 1616.2 L2455.3 1760.5 A40.0 40.0 0 0 0 2489.1 1779.2 L2514.8 1779.2 L2514.8 1942 L983.7 1942 Z" fill="url(#ag)"/><path d="M1927.2 1430.5 V2095" stroke="#858585" stroke-width="1.8" stroke-dasharray="13.5 9"/><path d="M983.7 1596.8 L1007.7 1596.8 A40.0 40.0 0 0 1 1039.4 1612.4 L1108.8 1702.4 A34.0 34.0 0 0 0 1135.7 1715.7 L1157.9 1715.7 A34.0 34.0 0 0 1 1184.5 1728.5 L1211.5 1762.4 A44.6 44.6 0 0 0 1246.4 1779.2 L1246.4 1779.2 A46.0 46.0 0 0 0 1281.7 1762.7 L1353.9 1676.2 A46.0 46.0 0 0 1 1389.2 1659.6 L1392.8 1659.6 A46.0 46.0 0 0 1 1428.6 1676.8 L1449.7 1703.0 A34.0 34.0 0 0 0 1476.2 1715.7 L1496.0 1715.7 A34.0 34.0 0 0 1 1524.0 1730.4 L1581.5 1813.9 A46.0 46.0 0 0 0 1619.4 1833.9 L1627.5 1833.9 A46.0 46.0 0 0 0 1664.3 1815.5 L1681.3 1792.8 A34.0 34.0 0 0 1 1708.5 1779.2 L1722.3 1779.2 A34.0 34.0 0 0 0 1749.6 1765.6 L1903.2 1559.9 A46.0 46.0 0 0 1 1940.1 1541.4 L1944.5 1541.4 A46.0 46.0 0 0 1 1982.0 1560.8 L2042.1 1645.3 A34.0 34.0 0 0 0 2069.8 1659.6 L2087.6 1659.6 A34.0 34.0 0 0 1 2115.1 1673.6 L2132.1 1696.8 A46.0 46.0 0 0 0 2169.2 1715.7 L2180.9 1715.7 A46.0 46.0 0 0 0 2217.8 1697.2 L2280.4 1613.2 A46.0 46.0 0 0 1 2317.2 1594.7 L2325.5 1594.7 A46.0 46.0 0 0 1 2364.4 1616.2 L2455.3 1760.5 A40.0 40.0 0 0 0 2489.1 1779.2 L2514.8 1779.2" stroke="#3192fb" stroke-width="7.2" fill="none" stroke-linejoin="round"/><circle cx="1927.2" cy="1541.4" r="17.8" fill="#ffffff" stroke="#2e90fa" stroke-width="9.4"/></svg>
<div class="t" style="top:1454.00px;font-size:31px;color:#d4d4d4;-webkit-text-stroke:0.2px #d4d4d4;left:911.62px;">40k</div>
<div class="t" style="top:1613.00px;font-size:31px;color:#d4d4d4;-webkit-text-stroke:0.2px #d4d4d4;left:911.62px;">30k</div>
<div class="t" style="top:1773.00px;font-size:31px;color:#d4d4d4;-webkit-text-stroke:0.2px #d4d4d4;left:911.62px;">20k</div>
<div class="t" style="top:1933.00px;font-size:31px;color:#d4d4d4;-webkit-text-stroke:0.2px #d4d4d4;left:911.62px;">10k</div>
<div class="t" style="top:2092.00px;font-size:31px;color:#d4d4d4;-webkit-text-stroke:0.2px #d4d4d4;left:945.10px;">0</div>
<div class="t" style="top:2124.00px;font-size:31.5px;color:#d2d2d2;letter-spacing:-1.417px;-webkit-text-stroke:0.2px #d2d2d2;left:1055.08px;">Jan</div>
<div class="t" style="top:2124.00px;font-size:31.5px;color:#d2d2d2;letter-spacing:-0.980px;-webkit-text-stroke:0.2px #d2d2d2;left:1158.50px;">Feb</div>
<div class="t" style="top:2124.00px;font-size:31.5px;color:#d2d2d2;letter-spacing:0.221px;-webkit-text-stroke:0.2px #d2d2d2;left:1268.60px;">Mar</div>
<div class="t" style="top:2124.00px;font-size:31.5px;color:#d2d2d2;letter-spacing:-0.115px;-webkit-text-stroke:0.2px #d2d2d2;left:1383.90px;">Apr</div>
<div class="t" style="top:2124.00px;font-size:31.5px;color:#d2d2d2;letter-spacing:-0.629px;-webkit-text-stroke:0.2px #d2d2d2;left:1491.40px;">May</div>
<div class="t" style="top:2124.00px;font-size:31.5px;color:#d2d2d2;letter-spacing:-1.417px;-webkit-text-stroke:0.2px #d2d2d2;left:1609.43px;">Jun</div>
<div class="t" style="top:2124.00px;font-size:31.5px;color:#d2d2d2;letter-spacing:-1.417px;-webkit-text-stroke:0.2px #d2d2d2;left:1716.08px;">Jul</div>
<div class="t" style="top:2124.00px;font-size:31.5px;color:#d2d2d2;letter-spacing:-0.065px;-webkit-text-stroke:0.2px #d2d2d2;left:1812.50px;">Aug</div>
<div class="t" style="top:2124.00px;font-size:31.5px;color:#d2d2d2;letter-spacing:-1.065px;-webkit-text-stroke:0.2px #d2d2d2;left:1926.30px;">Sep</div>
<div class="t" style="top:2124.00px;font-size:31.5px;color:#d2d2d2;letter-spacing:-0.676px;-webkit-text-stroke:0.2px #d2d2d2;left:2039.00px;">Oct</div>
<div class="t" style="top:2124.00px;font-size:31.5px;color:#d2d2d2;letter-spacing:-0.934px;-webkit-text-stroke:0.2px #d2d2d2;left:2146.00px;">Nov</div>
<div class="t" style="top:2124.00px;font-size:31.5px;color:#d2d2d2;letter-spacing:-0.784px;-webkit-text-stroke:0.2px #d2d2d2;left:2258.70px;">Dec</div>
<svg class="b" style="left:1984px;top:1460px" width="390" height="150" viewBox="1984 1460 390 150" fill="none"><path d="M2017.6 1466.3 H2344.4 Q2362.4 1466.3 2362.4 1484.3 V1585 Q2362.4 1603 2344.4 1603 H2017.6 Q1999.6 1603 1999.6 1585 V1552 L1989 1541 Q1987 1536.5 1989 1532 L1999.6 1521 V1484.3 Q1999.6 1466.3 2017.6 1466.3 Z" fill="#575757" stroke="#6c6c6c" stroke-width="1.6"/></svg>
<div class="t" style="top:1500.00px;font-size:32px;color:#ececec;letter-spacing:-1.046px;left:2031.70px;">June,25</div>
<div class="t" style="top:1545.00px;font-size:26.5px;color:#dcdcdc;letter-spacing:-0.195px;left:2030.70px;">Completed Tasks</div>
<div class="b" style="left:2247px;top:1537.3px;width:86px;height:40.3px;background:#ecfdf3;border-radius:9px 9px 22px 9px;border:1.5px solid #abefc6;"></div>
<div class="t" style="top:1548.00px;font-size:24.5px;color:#17b26a;font-weight:700;letter-spacing:-1.020px;left:2258.50px;">+24%</div>
<div class="b" style="left:2562px;top:1022px;width:1720.3px;height:604px;background:#575757;border-radius:28px;"></div>
<div class="t" style="top:1074.00px;font-size:42.6px;color:#ebebeb;letter-spacing:0.814px;-webkit-text-stroke:0.9px #ebebeb;left:2614.65px;">Resource Statistics</div>
<div class="t" style="top:1078.00px;font-size:31px;color:#a35fd1;font-weight:700;letter-spacing:-0.253px;left:4067.00px;">See All</div>
<svg class="b" style="left:4190px;top:1075.6px;" width="36" height="36" viewBox="-18 -18 36 36" fill="none" xmlns="http://www.w3.org/2000/svg"><path d="M-12.6 0 H12.6 M3.2 -9.6 L12.8 0 L3.2 9.6" stroke="#a35fd1" stroke-width="3.4" stroke-linecap="round" stroke-linejoin="round" fill="none"/></svg>
<svg class="b" style="left:2618.8px;top:1163.5px;" width="400" height="400" viewBox="2618.8 1163.5 400 400" fill="none" xmlns="http://www.w3.org/2000/svg"><path d="M2818.8 1363.5 L2818.80 1167.50 A196 196 0 0 1 3013.42 1340.29 Z" fill="#ff6a45" stroke="#ffffff" stroke-width="2.2" stroke-linejoin="round"/><path d="M2818.8 1363.5 L3013.42 1340.29 A196 196 0 0 1 2688.41 1509.84 Z" fill="#1cb466" stroke="#ffffff" stroke-width="2.2" stroke-linejoin="round"/><path d="M2818.8 1363.5 L2688.41 1509.84 A196 196 0 0 1 2635.21 1432.14 Z" fill="#1ec0df" stroke="#ffffff" stroke-width="2.2" stroke-linejoin="round"/><path d="M2818.8 1363.5 L2635.21 1432.14 A196 196 0 0 1 2657.08 1252.77 Z" fill="#4b7bff" stroke="#ffffff" stroke-width="2.2" stroke-linejoin="round"/><path d="M2818.8 1363.5 L2657.08 1252.77 A196 196 0 0 1 2818.80 1167.50 Z" fill="#ffb31f" stroke="#ffffff" stroke-width="2.2" stroke-linejoin="round"/></svg>
<div class="b" style="left:3236.9px;top:1182.9px;width:45.6px;height:20.8px;background:#ff6a45;border-radius:5px;"></div>
<div class="t" style="top:1179.00px;font-size:31px;color:#e2e2e2;letter-spacing:0.020px;-webkit-text-stroke:0.2px #e2e2e2;left:3301.00px;">Project Manager</div>
<div class="t" style="top:1179.00px;font-size:31px;color:#e2e2e2;-webkit-text-stroke:0.2px #e2e2e2;left:4192.26px;">22</div>
<div class="b" style="left:3236.9px;top:1251.5px;width:45.6px;height:20.8px;background:#ffb31f;border-radius:5px;"></div>
<div class="t" style="top:1248.00px;font-size:31px;color:#e2e2e2;letter-spacing:-0.239px;-webkit-text-stroke:0.2px #e2e2e2;left:3301.00px;">Backend Developer</div>
<div class="t" style="top:1248.00px;font-size:31px;color:#e2e2e2;-webkit-text-stroke:0.2px #e2e2e2;left:4192.26px;">08</div>
<div class="b" style="left:3236.9px;top:1320.1px;width:45.6px;height:20.8px;background:#1cb466;border-radius:5px;"></div>
<div class="t" style="top:1316.00px;font-size:31px;color:#e2e2e2;letter-spacing:-0.133px;-webkit-text-stroke:0.2px #e2e2e2;left:3301.00px;">Frontend Developer</div>
<div class="t" style="top:1316.00px;font-size:31px;color:#e2e2e2;-webkit-text-stroke:0.2px #e2e2e2;left:4192.26px;">05</div>
<div class="b" style="left:3236.9px;top:1388.7px;width:45.6px;height:20.8px;background:#4b7bff;border-radius:5px;"></div>
<div class="t" style="top:1385.00px;font-size:31px;color:#e2e2e2;letter-spacing:-0.317px;-webkit-text-stroke:0.2px #e2e2e2;left:3301.00px;">UX/UI Designer</div>
<div class="t" style="top:1385.00px;font-size:31px;color:#e2e2e2;-webkit-text-stroke:0.2px #e2e2e2;left:4192.26px;">03</div>
<div class="b" style="left:3236.9px;top:1457.3px;width:45.6px;height:20.8px;background:#1ec0df;border-radius:5px;"></div>
<div class="t" style="top:1453.00px;font-size:31px;color:#e2e2e2;letter-spacing:0.030px;-webkit-text-stroke:0.2px #e2e2e2;left:3302.00px;">Support Engineer</div>
<div class="t" style="top:1453.00px;font-size:31px;color:#e2e2e2;-webkit-text-stroke:0.2px #e2e2e2;left:4192.26px;">52</div>
<div class="b" style="left:3236.9px;top:1525.9px;width:45.6px;height:20.8px;background:#a35fd1;border-radius:5px;"></div>
<div class="t" style="top:1522.00px;font-size:31px;color:#e2e2e2;letter-spacing:0.313px;-webkit-text-stroke:0.2px #e2e2e2;left:3301.00px;">Infrastructure Engineer</div>
<div class="t" style="top:1522.00px;font-size:31px;color:#e2e2e2;-webkit-text-stroke:0.2px #e2e2e2;left:4192.26px;">52</div>
<div class="b" style="left:2562px;top:1681px;width:1720.3px;height:604px;background:#575757;border-radius:28px;overflow:hidden;"></div>
<div class="t" style="top:1733.00px;font-size:42.6px;color:#ebebeb;letter-spacing:0.682px;-webkit-text-stroke:0.9px #ebebeb;left:2617.65px;">Workload Stats</div>
<div class="t" style="top:1738.00px;font-size:31px;color:#a35fd1;font-weight:700;letter-spacing:-0.253px;left:4067.00px;">See All</div>
<svg class="b" style="left:4190px;top:1734.7px;" width="36" height="36" viewBox="-18 -18 36 36" fill="none" xmlns="http://www.w3.org/2000/svg"><path d="M-12.6 0 H12.6 M3.2 -9.6 L12.8 0 L3.2 9.6" stroke="#a35fd1" stroke-width="3.4" stroke-linecap="round" stroke-linejoin="round" fill="none"/></svg>
<div class="b" style="left:2562px;top:1808.4px;width:1720.3px;height:2px;background:#6d6d6d;"></div>
<div class="b" style="left:2562px;top:1898.6px;width:1720.3px;height:2px;background:#6d6d6d;"></div>
<div class="b" style="left:2562px;top:2008.6px;width:1720.3px;height:2px;background:#6d6d6d;"></div>
<div class="b" style="left:2562px;top:2118px;width:1720.3px;height:2px;background:#6d6d6d;"></div>
<div class="b" style="left:2562px;top:2228px;width:1720.3px;height:2px;background:#6d6d6d;"></div>
<div class="b" style="left:3438.1px;top:1809.4px;width:2px;height:419.6px;background:#6d6d6d;"></div>
<div class="t" style="top:1841.00px;font-size:31px;color:#e4e4e4;letter-spacing:-0.016px;-webkit-text-stroke:0.2px #e4e4e4;left:2606.50px;">Person</div>
<svg class="b" style="left:2714.8px;top:1839.2px;" width="32" height="32" viewBox="-16 -16 32 32" fill="none" xmlns="http://www.w3.org/2000/svg"><path d="M-6.4 -5.2 L0 -11.4 L6.4 -5.2 M-6.4 5.2 L0 11.4 L6.4 5.2" stroke="#e6e6e6" stroke-width="2.6" stroke-linecap="round" stroke-linejoin="round" fill="none"/></svg>
<div class="t" style="top:1841.00px;font-size:31px;color:#e4e4e4;letter-spacing:0.236px;-webkit-text-stroke:0.2px #e4e4e4;left:3484.70px;">Progress</div>
<svg class="b" style="left:3620.8px;top:1839.2px;" width="32" height="32" viewBox="-16 -16 32 32" fill="none" xmlns="http://www.w3.org/2000/svg"><path d="M-6.4 -5.2 L0 -11.4 L6.4 -5.2 M-6.4 5.2 L0 11.4 L6.4 5.2" stroke="#e6e6e6" stroke-width="2.6" stroke-linecap="round" stroke-linejoin="round" fill="none"/></svg>
<svg class="b" style="left:2606px;top:1926.9px;" width="57.2" height="57.2" viewBox="-28.6 -28.6 57.2 57.2" fill="none" xmlns="http://www.w3.org/2000/svg"><defs><clipPath id="av1c"><circle cx="0" cy="0" r="1"/></clipPath><filter id="av1f" x="-0.2" y="-0.2" width="1.4" height="1.4"><feGaussianBlur stdDeviation="0.035"/></filter></defs><g transform="scale(27.6)"><g clip-path="url(#av1c)"><g filter="url(#av1f)"><rect x="-1.3" y="-1.3" width="2.6" height="2.6" fill="#a45ed6"/><path d="M-0.75 0.72 L-0.42 0.56 L0.4 0.56 L0.72 0.72 L0.5 1.3 L-0.5 1.3 Z" fill="#2a2d47"/><path d="M-0.42 0.56 L-0.36 0.92 L0.34 0.92 L0.4 0.56 Z" fill="#f3f1ef"/><path d="M-0.2 0.5 L0.2 0.5 L0.12 0.9 L-0.16 0.9 Z" fill="#c8937e"/><ellipse cx="-0.03" cy="0.08" rx="0.5" ry="0.64" fill="#d8a691"/><path d="M-0.6 -0.05 Q-0.72 -0.6 -0.42 -0.78 Q-0.1 -0.96 0.3 -0.84 Q0.56 -0.7 0.54 -0.3 Q0.54 -0.1 0.47 0.0 Q0.45 -0.4 0.3 -0.56 Q0 -0.62 -0.36 -0.54 Q-0.52 -0.36 -0.54 -0.02 Z" fill="#2a2d30"/><ellipse cx="-0.3" cy="-0.06" rx="0.13" ry="0.05" fill="#5b4038"/><ellipse cx="0.18" cy="-0.06" rx="0.13" ry="0.05" fill="#5b4038"/><ellipse cx="-0.05" cy="0.18" rx="0.1" ry="0.05" fill="#b98572"/><ellipse cx="-0.04" cy="0.42" rx="0.2" ry="0.055" fill="#b5706f"/></g></g></g></svg>
<div class="t" style="top:1940.00px;font-size:31.3px;color:#e4e4e4;letter-spacing:-0.414px;-webkit-text-stroke:0.2px #e4e4e4;left:2676.40px;">Md. Moniruzzaman</div>
<div class="t" style="top:1941.00px;font-size:29.8px;color:#e6e6e6;letter-spacing:-0.443px;-webkit-text-stroke:0.25px #e6e6e6;left:3484.82px;">100/40</div>
<div class="b" style="left:3593.6px;top:1950.9px;width:565px;height:9.3px;background:#fdb022;border-radius:5px;opacity:0.3;"></div>
<div class="b" style="left:3593.6px;top:1950.9px;width:249.165px;height:9.3px;background:#fdb022;border-radius:5px;"></div>
<div class="t" style="top:1941.00px;font-size:29.8px;color:#e6e6e6;letter-spacing:-0.997px;-webkit-text-stroke:0.25px #e6e6e6;left:4177.93px;">40%</div>
<svg class="b" style="left:2606px;top:2036.9px;" width="57.2" height="57.2" viewBox="-28.6 -28.6 57.2 57.2" fill="none" xmlns="http://www.w3.org/2000/svg"><defs><clipPath id="av2c"><circle cx="0" cy="0" r="1"/></clipPath><filter id="av2f" x="-0.2" y="-0.2" width="1.4" height="1.4"><feGaussianBlur stdDeviation="0.035"/></filter></defs><g transform="scale(27.6)"><g clip-path="url(#av2c)"><g filter="url(#av2f)"><rect x="-1.3" y="-1.3" width="2.6" height="2.6" fill="#8a91b1"/><path d="M-0.85 0.62 L-0.3 0.38 L0.3 0.3 L0.8 0.62 L0.8 1.3 L-0.8 1.3 Z" fill="#5b6a82"/><path d="M-0.32 0.4 L0.28 0.3 L0.1 0.75 L0.02 1.2 L-0.38 1.2 Z" fill="#f2f2f2"/><path d="M-0.2 0.2 L0.22 0.16 L0.2 0.42 L-0.05 0.62 L-0.22 0.45 Z" fill="#c98855"/><ellipse cx="-0.06" cy="-0.2" rx="0.4" ry="0.5" fill="#dc9c6c"/><path d="M-0.34 0.1 Q-0.06 0.36 0.3 0.06 L0.26 0.22 Q-0.04 0.48 -0.3 0.26 Z" fill="#3a2a22"/><path d="M-0.44 -0.28 Q-0.5 -0.68 -0.2 -0.8 Q0.1 -0.88 0.28 -0.66 Q0.42 -0.5 0.36 -0.22 Q0.3 -0.5 0.16 -0.58 Q-0.1 -0.6 -0.34 -0.5 Q-0.42 -0.4 -0.42 -0.26 Z" fill="#1f1d1e"/><ellipse cx="-0.26" cy="-0.28" rx="0.11" ry="0.04" fill="#4a3024"/><ellipse cx="0.08" cy="-0.28" rx="0.11" ry="0.04" fill="#4a3024"/><ellipse cx="-0.08" cy="0.04" rx="0.13" ry="0.06" fill="#d9a9a4"/></g></g></g></svg>
<div class="t" style="top:2050.00px;font-size:31.3px;color:#e4e4e4;letter-spacing:-0.711px;-webkit-text-stroke:0.2px #e4e4e4;left:2678.40px;">Ashaduzzaman</div>
<div class="t" style="top:2051.00px;font-size:29.8px;color:#e6e6e6;letter-spacing:-0.443px;-webkit-text-stroke:0.25px #e6e6e6;left:3484.82px;">120/30</div>
<div class="b" style="left:3593.6px;top:2060.9px;width:565px;height:9.3px;background:#ff6b47;border-radius:5px;opacity:0.3;"></div>
<div class="b" style="left:3593.6px;top:2060.9px;width:151.138px;height:9.3px;background:#ff6b47;border-radius:5px;"></div>
<div class="t" style="top:2051.00px;font-size:29.8px;color:#e6e6e6;letter-spacing:-0.497px;-webkit-text-stroke:0.25px #e6e6e6;left:4176.93px;">25%</div>
<svg class="b" style="left:2606px;top:2146.9px;" width="57.2" height="57.2" viewBox="-28.6 -28.6 57.2 57.2" fill="none" xmlns="http://www.w3.org/2000/svg"><defs><clipPath id="av3c"><circle cx="0" cy="0" r="1"/></clipPath><filter id="av3f" x="-0.2" y="-0.2" width="1.4" height="1.4"><feGaussianBlur stdDeviation="0.035"/></filter></defs><g transform="scale(27.6)"><g clip-path="url(#av3c)"><g filter="url(#av3f)"><rect x="-1.3" y="-1.3" width="2.6" height="2.6" fill="#e0e0e0"/><path d="M-0.72 0.68 L-0.2 0.45 L0.4 0.25 L0.8 0.6 L0.8 1.3 L-0.8 1.3 Z" fill="#4047cf"/><path d="M-0.24 0.5 L-0.02 0.55 L-0.1 1.0 L-0.3 1.0 Z" fill="#f4f4f6"/><path d="M-0.2 0.3 L0.25 0.25 L0.1 0.6 L-0.2 0.5 Z" fill="#b87a52"/><ellipse cx="0.0" cy="-0.08" rx="0.42" ry="0.52" fill="#c98f67"/><path d="M-0.4 0.12 Q-0.3 0.5 0.02 0.48 Q0.34 0.44 0.42 0.1 L0.36 0.1 Q0.2 0.3 0 0.3 Q-0.2 0.3 -0.34 0.1 Z" fill="#1c1a1b"/><path d="M-0.46 -0.2 Q-0.52 -0.6 -0.2 -0.78 Q0.12 -0.9 0.38 -0.66 Q0.54 -0.46 0.46 -0.16 Q0.4 -0.38 0.3 -0.46 Q0 -0.52 -0.3 -0.44 Q-0.42 -0.36 -0.42 -0.2 Z" fill="#18181a"/><rect x="-0.4" y="-0.3" width="0.32" height="0.2" rx="0.04" fill="#b9b3d8" stroke="#5a5262" stroke-width="0.04"/><rect x="0.02" y="-0.3" width="0.32" height="0.2" rx="0.04" fill="#b9b3d8" stroke="#5a5262" stroke-width="0.04"/><ellipse cx="-0.04" cy="0.15" rx="0.13" ry="0.05" fill="#f6f2f2"/></g></g></g></svg>
<div class="t" style="top:2160.00px;font-size:31.3px;color:#e4e4e4;letter-spacing:-0.211px;-webkit-text-stroke:0.2px #e4e4e4;left:2678.40px;">Abul Hasan</div>
<div class="t" style="top:2161.00px;font-size:29.8px;color:#e6e6e6;letter-spacing:-0.443px;-webkit-text-stroke:0.25px #e6e6e6;left:3484.82px;">122/25</div>
<div class="b" style="left:3593.6px;top:2170.9px;width:565px;height:9.3px;background:#1cb466;border-radius:5px;opacity:0.3;"></div>
<div class="b" style="left:3593.6px;top:2170.9px;width:249.165px;height:9.3px;background:#1cb466;border-radius:5px;"></div>
<div class="t" style="top:2161.00px;font-size:29.8px;color:#e6e6e6;letter-spacing:-0.997px;-webkit-text-stroke:0.25px #e6e6e6;left:4177.93px;">40%</div>
</body></html>
